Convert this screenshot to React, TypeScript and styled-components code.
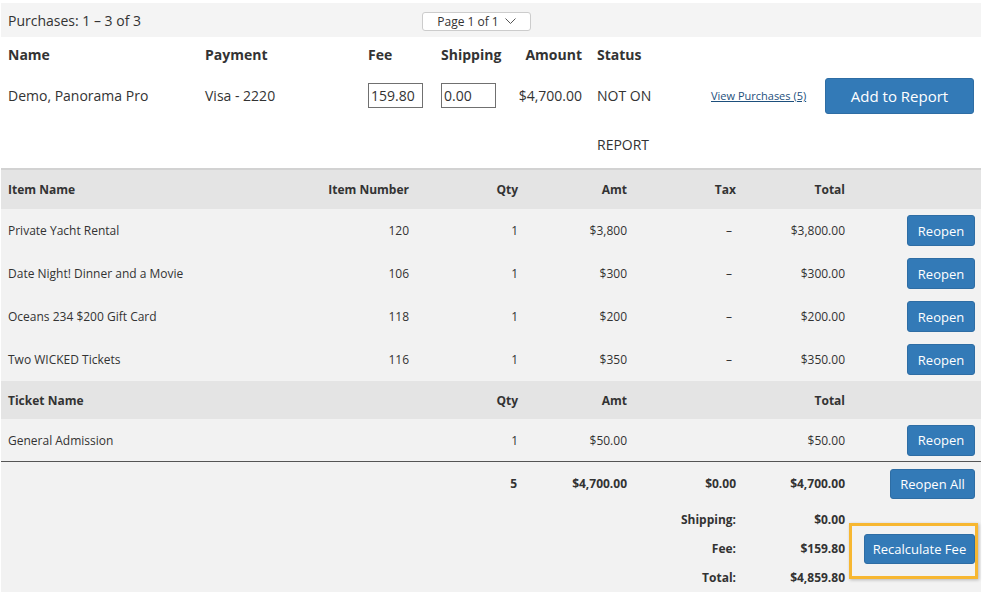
import React from "react";
import styled, { createGlobalStyle, css } from "styled-components";

const GlobalStyle = createGlobalStyle`
  body {
    margin: 0;
    background: #fff;
    color: #333;
    font-family: "Open Sans", "Liberation Sans", sans-serif;
  }
`;

const Page = styled.div`
  width: 980px;
  padding: 3px 1px 0;
`;

const TopBar = styled.div`
  height: 34px;
  background: #f4f4f4;
  display: grid;
  grid-template-columns: 414px auto;
  align-items: center;
  padding-left: 7px;
  font-size: 14px;
`;

const PageSelect = styled.div`
  width: 107px;
  height: 17px;
  margin-top: 3px;
  border: 1px solid #ccc;
  border-radius: 3px;
  background: #fff;
  display: flex;
  align-items: center;
  justify-content: center;
  gap: 6px;
  font-size: 12px;
`;

const summaryCols = css`
  display: grid;
  grid-template-columns: 197px 163px 73px 73px 68px 115px 1fr auto;
  padding: 0 7px 0 7px;
`;

const SummaryHead = styled.div`
  ${summaryCols};
  height: 34px;
  align-items: center;
  font-size: 14px;
  font-weight: 700;
`;

const SummaryRow = styled.div`
  ${summaryCols};
  height: 97px;
  border-bottom: 2px solid #d2d2d2;
  font-size: 14px;
`;

const SCell = styled.div<{ $right?: boolean; $pad?: number }>`
  height: 49px;
  display: flex;
  align-items: center;
  justify-content: ${(p) => (p.$right ? "flex-end" : "flex-start")};
  padding-left: ${(p) => p.$pad ?? 0}px;
`;

const HeadLabel = styled.div<{ $right?: boolean; $pad?: number }>`
  text-align: ${(p) => (p.$right ? "right" : "left")};
  padding-left: ${(p) => p.$pad ?? 0}px;
`;

const StatusCell = styled.div`
  padding-left: 15px;
  line-height: 49px;
`;

const FeeInput = styled.input`
  box-sizing: border-box;
  width: 55px;
  height: 25px;
  border: 1px solid #707070;
  padding: 0 2px;
  font: 14px "Open Sans", "Liberation Sans", sans-serif;
  color: #333;
`;

const ViewLink = styled.a`
  font-size: 11px;
  color: #1d4f7c;
  text-decoration: underline;
  cursor: pointer;
`;

const Button = styled.button<{ $w: number; $h: number; $size?: number }>`
  width: ${(p) => p.$w}px;
  height: ${(p) => p.$h}px;
  background: #337ab7;
  color: #fff;
  border: 1px solid #2e6da4;
  border-radius: 3px;
  font-family: "Open Sans", "Liberation Sans", sans-serif;
  font-size: ${(p) => p.$size ?? 13}px;
  padding: 0;
  cursor: pointer;
`;

const tableCols = css`
  display: grid;
  grid-template-columns: 292px 109px 109px 109px 109px 109px 1fr;
  padding: 0 6px 0 7px;
  align-items: center;
  font-size: 12px;
`;

const HeadRow = styled.div<{ $h: number }>`
  ${tableCols};
  height: ${(p) => p.$h}px;
  background: #e4e4e4;
  font-weight: 700;
`;

const ItemRow = styled.div<{ $last?: boolean }>`
  ${tableCols};
  height: 43px;
  background: #f2f2f2;
  ${(p) => p.$last && "height: 42px; border-bottom: 1px solid #555;"}
`;

const Cell = styled.div<{ $align?: "left" | "right"; $pr?: number }>`
  text-align: ${(p) => p.$align ?? "left"};
  padding-right: ${(p) => p.$pr ?? 0}px;
  display: flex;
  justify-content: ${(p) => (p.$align === "right" ? "flex-end" : "flex-start")};
`;

const Footer = styled.div`
  ${tableCols};
  grid-template-rows: 43px 29px 29px 29px;
  background: #f2f2f2;
  font-weight: 700;
`;

const HighlightCell = styled.div`
  grid-column: 7;
  grid-row: 2 / 5;
  justify-self: end;
  align-self: center;
  position: relative;
  &::after {
    content: "";
    position: absolute;
    left: -15px;
    right: -3px;
    top: -11px;
    bottom: -15px;
    border: 3px solid #f7b731;
    box-shadow: 1px 1px 3px rgba(0, 0, 0, 0.25);
    pointer-events: none;
  }
`;

const items = [
  { name: "Private Yacht Rental", num: "120", amt: "$3,800", total: "$3,800.00" },
  { name: "Date Night! Dinner and a Movie", num: "106", amt: "$300", total: "$300.00" },
  { name: "Oceans 234 $200 Gift Card", num: "118", amt: "$200", total: "$200.00" },
  { name: "Two WICKED Tickets", num: "116", amt: "$350", total: "$350.00" },
];

const Chevron = () => (
  <svg width="11" height="7" viewBox="0 0 11 7">
    <polyline points="0.5,0.5 5.5,5.5 10.5,0.5" fill="none" stroke="#555" strokeWidth="1" />
  </svg>
);

export default function App() {
  return (
    <Page>
      <GlobalStyle />
      <TopBar>
        <span>Purchases: 1 – 3 of 3</span>
        <PageSelect>
          Page 1 of 1 <Chevron />
        </PageSelect>
      </TopBar>

      <SummaryHead>
        <HeadLabel>Name</HeadLabel>
        <HeadLabel>Payment</HeadLabel>
        <HeadLabel>Fee</HeadLabel>
        <HeadLabel>Shipping</HeadLabel>
        <HeadLabel $right>Amount</HeadLabel>
        <HeadLabel $pad={15}>Status</HeadLabel>
        <div />
        <div />
      </SummaryHead>
      <SummaryRow>
        <SCell>Demo, Panorama Pro</SCell>
        <SCell>Visa - 2220</SCell>
        <SCell>
          <FeeInput defaultValue="159.80" />
        </SCell>
        <SCell>
          <FeeInput defaultValue="0.00" />
        </SCell>
        <SCell $right>$4,700.00</SCell>
        <StatusCell>NOT ON REPORT</StatusCell>
        <SCell $pad={14}>
          <ViewLink>View Purchases (5)</ViewLink>
        </SCell>
        <SCell>
          <Button $w={149} $h={36} $size={15}>
            Add to Report
          </Button>
        </SCell>
      </SummaryRow>

      <HeadRow $h={39}>
        <Cell>Item Name</Cell>
        <Cell $align="right">Item Number</Cell>
        <Cell $align="right">Qty</Cell>
        <Cell $align="right">Amt</Cell>
        <Cell $align="right">Tax</Cell>
        <Cell $align="right">Total</Cell>
        <Cell />
      </HeadRow>
      {items.map((it) => (
        <ItemRow key={it.num}>
          <Cell>{it.name}</Cell>
          <Cell $align="right">{it.num}</Cell>
          <Cell $align="right">1</Cell>
          <Cell $align="right">{it.amt}</Cell>
          <Cell $align="right" $pr={4}>–</Cell>
          <Cell $align="right">{it.total}</Cell>
          <Cell $align="right">
            <Button $w={68} $h={31}>Reopen</Button>
          </Cell>
        </ItemRow>
      ))}

      <HeadRow $h={38}>
        <Cell>Ticket Name</Cell>
        <Cell />
        <Cell $align="right">Qty</Cell>
        <Cell $align="right">Amt</Cell>
        <Cell />
        <Cell $align="right">Total</Cell>
        <Cell />
      </HeadRow>
      <ItemRow $last>
        <Cell>General Admission</Cell>
        <Cell />
        <Cell $align="right">1</Cell>
        <Cell $align="right">$50.00</Cell>
        <Cell />
        <Cell $align="right">$50.00</Cell>
        <Cell $align="right">
          <Button $w={68} $h={31}>Reopen</Button>
        </Cell>
      </ItemRow>

      <Footer>
        <Cell />
        <Cell />
        <Cell $align="right" $pr={1}>5</Cell>
        <Cell $align="right">$4,700.00</Cell>
        <Cell $align="right">$0.00</Cell>
        <Cell $align="right">$4,700.00</Cell>
        <Cell $align="right">
          <Button $w={85} $h={30}>Reopen All</Button>
        </Cell>

        <Cell style={{ gridColumn: 5, gridRow: 2 }} $align="right">Shipping:</Cell>
        <Cell style={{ gridColumn: 6, gridRow: 2 }} $align="right">$0.00</Cell>
        <Cell style={{ gridColumn: 5, gridRow: 3 }} $align="right">Fee:</Cell>
        <Cell style={{ gridColumn: 6, gridRow: 3 }} $align="right">$159.80</Cell>
        <Cell style={{ gridColumn: 5, gridRow: 4 }} $align="right">Total:</Cell>
        <Cell style={{ gridColumn: 6, gridRow: 4 }} $align="right">$4,859.80</Cell>
        <HighlightCell>
          <Button $w={111} $h={30}>Recalculate Fee</Button>
        </HighlightCell>
      </Footer>
    </Page>
  );
}
